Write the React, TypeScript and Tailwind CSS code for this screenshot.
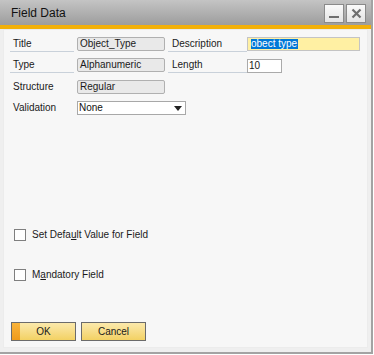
export default function App() {
  const font = { fontFamily: '"Liberation Sans", Arial, sans-serif' };

  return (
    <div className="w-[374px] h-[355px] bg-white" style={font}>
      <div className="w-[373px] h-[354px] border-r-2 border-b-2 border-[#a3a3a3] bg-[#efefef] flex flex-col">
        {/* Title bar */}
        <div className="h-[25px] bg-gradient-to-b from-[#c4c4c4] to-[#9d9d9d] flex items-center pl-[11px] pr-[5px]">
          <span className="text-[12px] text-[#111] leading-none">Field Data</span>
          <div className="ml-auto flex gap-[2px] mt-[2px]">
            <button className="w-[20px] h-[19px] border border-[#8a8a8a] bg-gradient-to-b from-[#fafafa] to-[#e4e4e4] flex items-end justify-center pb-[4px]">
              <span className="block w-[10px] h-[2px] bg-[#6e6e6e]" />
            </button>
            <button className="w-[20px] h-[19px] border border-[#8a8a8a] bg-gradient-to-b from-[#fafafa] to-[#e4e4e4] flex items-center justify-center">
              <svg width="11" height="11" viewBox="0 0 11 11">
                <path d="M1.5 1.5 L9.5 9.5 M9.5 1.5 L1.5 9.5" stroke="#6e6e6e" strokeWidth="2.2" />
              </svg>
            </button>
          </div>
        </div>
        <div className="h-[4px] bg-[#f2b009]" />

        {/* Body */}
        <div className="flex-1 px-[3px] pb-[4px] flex">
          <div className="flex-1 bg-[#f7f7f7] border border-[#ececec] pt-[7px] pl-[6px] flex flex-col text-[10px] text-[#1a1a1a]">
            {/* Row 1 */}
            <div className="flex items-start h-[15px]">
              <div className="w-[64px] h-[15px] border-b border-[#c9d1da] pl-[3px] leading-[14px]">Title</div>
              <div className="ml-[3px] w-[88px] h-[14px] rounded-[2px] border border-[#b0b0b0] bg-[#e9e9e9] pl-[2px] leading-[12px]">Object_Type</div>
              <div className="ml-[3px] w-[79px] h-[15px] border-b border-[#c9d1da] pl-[4px] leading-[14px]">Description</div>
              <div className="w-[113px] h-[14px] border border-[#c4c4c4] bg-[#fff0a3] pl-[3px] pt-[1px] flex">
                <span className="bg-[#0078d7] text-white leading-[10px] h-[10px] pr-[1px]">obect type</span>
              </div>
            </div>
            {/* Row 2 */}
            <div className="flex items-start h-[15px] mt-[6px]">
              <div className="w-[64px] h-[15px] border-b border-[#c9d1da] pl-[3px] leading-[14px]">Type</div>
              <div className="ml-[3px] w-[88px] h-[14px] rounded-[2px] border border-[#b0b0b0] bg-[#e9e9e9] pl-[2px] leading-[12px]">Alphanumeric</div>
              <div className="ml-[3px] w-[79px] h-[15px] border-b border-[#c9d1da] pl-[4px] leading-[14px]">Length</div>
              <div className="w-[35px] h-[14px] mt-[1px] border border-[#aaaaaa] bg-white pl-[1px] leading-[12px]">10</div>
            </div>
            {/* Row 3 */}
            <div className="flex items-start h-[14px] mt-[7px]">
              <div className="w-[64px] h-[14px] pl-[3px] leading-[14px]">Structure</div>
              <div className="ml-[3px] w-[88px] h-[14px] rounded-[2px] border border-[#b0b0b0] bg-[#e9e9e9] pl-[2px] leading-[12px]">Regular</div>
            </div>
            {/* Row 4 */}
            <div className="flex items-start h-[14px] mt-[7px]">
              <div className="w-[64px] h-[14px] pl-[3px] leading-[14px]">Validation</div>
              <div className="ml-[3px] w-[109px] h-[14px] border border-[#a8a8a8] bg-white pl-[1px] flex items-center">
                <span className="leading-[12px] text-[#111]">None</span>
                <svg className="ml-auto mr-[3px]" width="8" height="5" viewBox="0 0 8 5">
                  <path d="M0 0 H8 L4 5 Z" fill="#222" />
                </svg>
              </div>
            </div>

            {/* Checkboxes */}
            <label className="flex items-center mt-[114px] ml-[4px] h-[12px]">
              <span className="w-[12px] h-[12px] border border-[#7f7f7f] bg-white" />
              <span className="ml-[6px] leading-[12px]">
                Set Defa<span className="underline">u</span>lt Value for Field
              </span>
            </label>
            <label className="flex items-center mt-[28px] ml-[4px] h-[12px]">
              <span className="w-[12px] h-[12px] border border-[#7f7f7f] bg-white" />
              <span className="ml-[6px] leading-[12px]">
                M<span className="underline">a</span>ndatory Field
              </span>
            </label>

            {/* Buttons */}
            <div className="flex gap-[5px] mt-[41px] ml-[1px]">
              <button className="relative w-[65px] h-[19px] border border-[#6b6b6b] bg-gradient-to-b from-[#fbe9ab] to-[#f3d162] text-[10px] text-[#1a1a1a] overflow-hidden">
                <span className="absolute left-0 top-0 bottom-0 w-[8px] bg-gradient-to-b from-[#f9b43a] to-[#ef9a1a]" />
                <span className="relative">OK</span>
              </button>
              <button className="w-[65px] h-[19px] border border-[#6b6b6b] bg-gradient-to-b from-[#fbe9ab] to-[#f3d162] text-[10px] text-[#1a1a1a]">
                Cancel
              </button>
            </div>
          </div>
        </div>
      </div>
    </div>
  );
}
